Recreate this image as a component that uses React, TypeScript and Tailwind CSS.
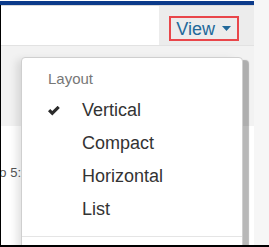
import React from "react";

const items = ["Vertical", "Compact", "Horizontal", "List"];

function Check() {
  return (
    <svg width="12" height="10" viewBox="0 0 12 10" className="block">
      <path d="M0 5.2 L2.2 3 L4.3 5.1 L9.6 -0.2 L11.8 2 L4.3 9.5 Z" fill="#2b2b2b" />
    </svg>
  );
}

export default function App() {
  return (
    <div
      className="relative flex h-[247px] w-[269px] overflow-hidden border-b-2 border-black bg-white"
      style={{ fontFamily: '"Liberation Sans", Arial, sans-serif' }}
    >
      <div className="flex w-[254px] flex-col">
        <div className="h-px bg-white" />
        <div className="h-[4px] bg-[#0b3a8a]" />
        <div className="flex flex-1 flex-col border-l border-black">
          <div className="h-px bg-[#d9d9d9]" />
          <div className="flex h-[39px]">
            <div className="flex-1 bg-white" />
            <div className="flex w-[95px] items-start justify-end bg-[#ececec] pr-[15px] pt-[10px]">
              <div className="flex h-[25px] items-center gap-[7px] border-2 border-[#e9464a] pl-[5px] pr-[6px]">
                <span className="text-[18px] leading-none text-[#23699a]">View</span>
                <svg width="9" height="5" viewBox="0 0 9 5" className="block">
                  <path d="M0 0 H9 L4.5 5 Z" fill="#23699a" />
                </svg>
              </div>
            </div>
          </div>
          <div className="h-[81px] border-t border-[#e2e2e2] bg-[#f2f2f2]" />
          <div className="flex h-[53px] items-end overflow-hidden bg-white">
            <div className="flex w-[21px] justify-end overflow-hidden whitespace-nowrap text-[13px] leading-none text-[#555]">
              <span className="pr-[1px]">1 to 5:</span>
            </div>
          </div>
          <div className="flex-1 bg-white" />
        </div>
      </div>
      <div className="w-[15px] bg-[#f6f6f6]" />

      <div className="absolute left-[21px] top-[57px] h-[220px] w-[222px] rounded-[4px] border border-[#cfcfcf] bg-white pt-[10px] shadow-[6px_3px_1px_rgba(0,0,0,0.28),-7px_0_9px_-3px_rgba(0,0,0,0.12)]">
        <div className="mb-[4px] pl-[26px] text-[15px] leading-[22px] text-[#777777]">Layout</div>
        {items.map((it, i) => (
          <div key={it} className="flex h-[33px] items-center text-[18px] text-[#333333]">
            <div className="flex w-[60px] justify-start pl-[26px]">{i === 0 ? <Check /> : null}</div>
            <span>{it}</span>
          </div>
        ))}
        <div className="mt-[10px] h-px bg-[#e5e5e5]" />
      </div>
    </div>
  );
}
